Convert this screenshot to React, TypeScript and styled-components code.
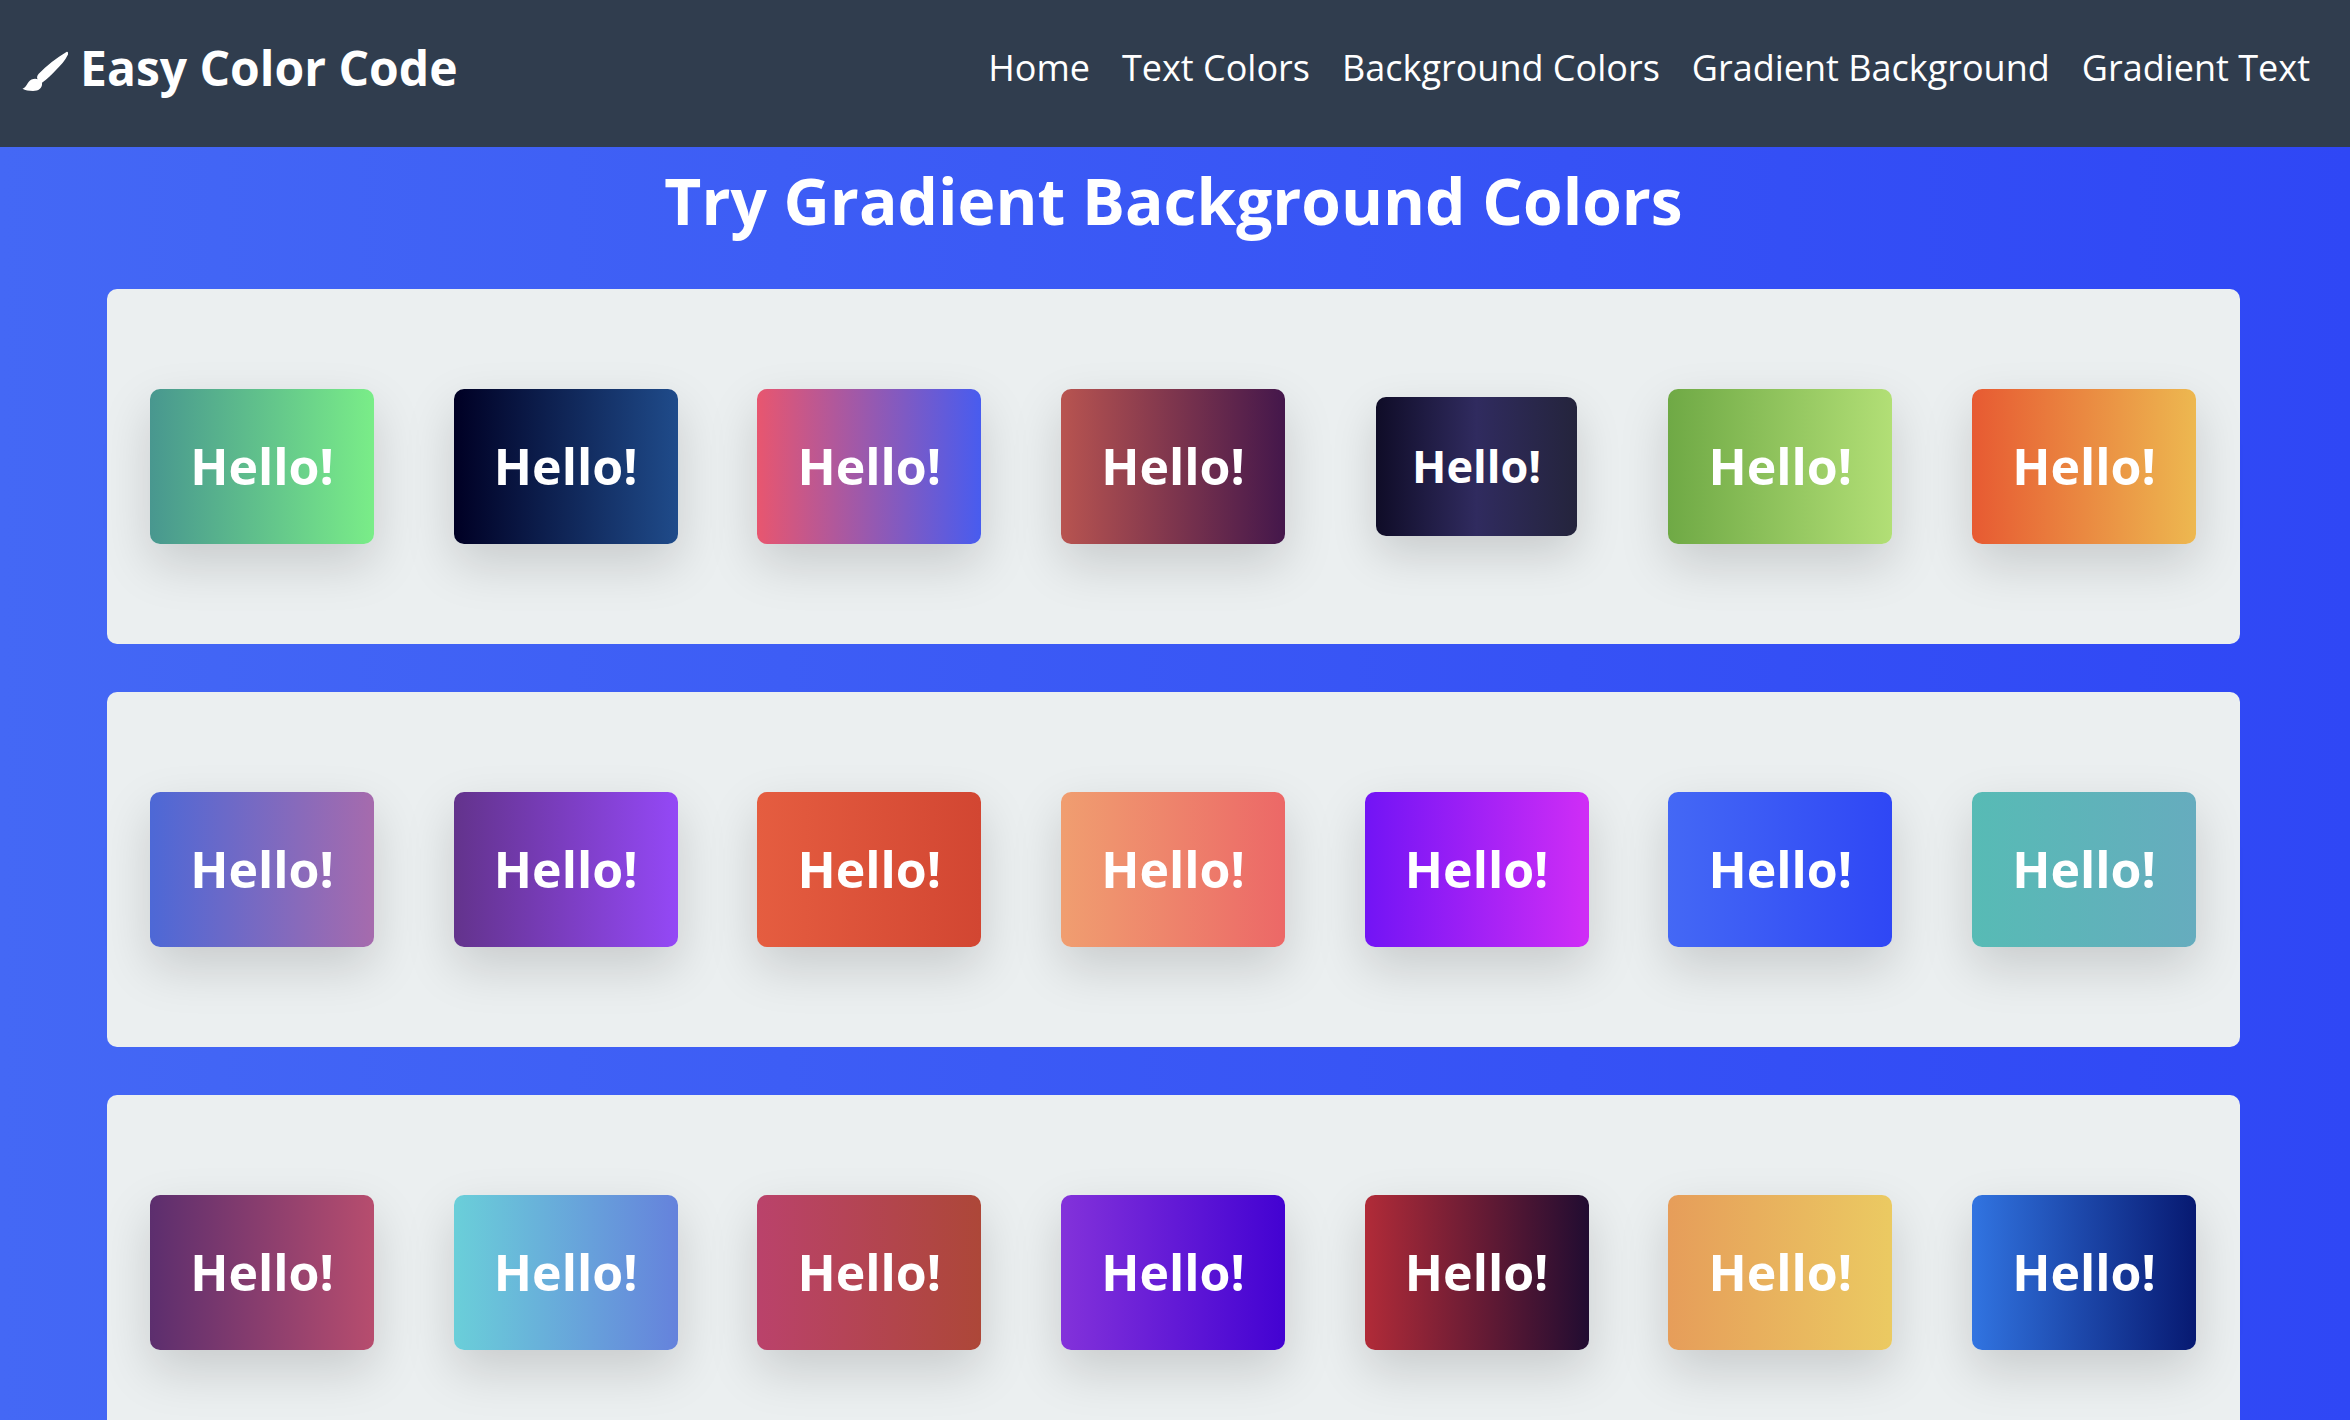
import React from "react";
import styled, { createGlobalStyle, css } from "styled-components";

const GlobalStyle = createGlobalStyle`
  * {
    box-sizing: border-box;
  }

  body {
    margin: 0;
    font-family: "Open Sans", "Noto Sans", sans-serif;
    color: #ffffff;
    background: #3f62f6;
  }
`;

const Page = styled.div`
  min-height: 100vh;
  background: linear-gradient(to right, #4468f5, #2f47f5);
`;

const Header = styled.header`
  display: flex;
  justify-content: space-between;
  align-items: flex-start;
  min-height: 147px;
  padding: 35px 40px 32px 22px;
  background: #303d4e;
`;

const Brand = styled.a`
  display: flex;
  align-items: center;
  gap: 12px;
  color: inherit;
  font-size: 48px;
  font-weight: 700;
  line-height: 65px;
  text-decoration: none;
`;

const BrushIcon = styled.svg`
  width: 46px;
  height: 40px;
  margin-top: 6px;
  fill: currentColor;
`;

const Nav = styled.nav`
  display: flex;
  flex-wrap: wrap;
  gap: 32px;
  padding-top: 8px;
`;

const NavLink = styled.a`
  color: inherit;
  font-size: 36px;
  line-height: 49px;
  text-decoration: none;
`;

const Main = styled.main`
  padding: 10px 110px 48px 107px;
`;

const Title = styled.h1`
  margin: 0 0 44px;
  font-size: 64px;
  font-weight: 700;
  line-height: 88px;
  text-align: center;
`;

const Panels = styled.div`
  display: flex;
  flex-direction: column;
  gap: 48px;
`;

const Panel = styled.section`
  display: flex;
  justify-content: space-between;
  padding: 100px 44px 100px 43px;
  border-radius: 10px;
  background: #ebeff0;
`;

const Slot = styled.div`
  display: flex;
  align-items: center;
  justify-content: center;
  width: 224px;
  height: 155px;
`;

const Swatch = styled.button<{ $colors: string; $shrunk: boolean }>`
  width: 100%;
  height: 100%;
  padding: 0 0 2px;
  border: 0;
  border-radius: 10px;
  color: inherit;
  font-family: inherit;
  font-size: 50px;
  font-weight: 700;
  line-height: 68px;
  cursor: pointer;
  background: linear-gradient(to right, ${(p) => p.$colors});
  box-shadow: 0 20px 50px rgba(0, 0, 0, 0.15);

  ${(p) =>
    p.$shrunk &&
    css`
      width: 90%;
      height: 90%;
      font-size: 45px;
      box-shadow: 0 18px 45px rgba(0, 0, 0, 0.15);
    `}
`;

const rows: string[][] = [
  [
    "#48978f, #7aed88",
    "#000024, #1f4b8a",
    "#e8566f, #485cef",
    "#b85450, #44174b",
    "#0f0c27, #302b5f, #24243c",
    "#6fa945, #b2df76",
    "#e75a32, #edb850",
  ],
  [
    "#4d68d6, #a66bad",
    "#63338c, #9448f6",
    "#e55d40, #d24632",
    "#f09e70, #ec6867",
    "#7214f5, #d02df6",
    "#4468f5, #2f47f5",
    "#57bbb5, #66acbe",
  ],
  [
    "#5c2e6e, #b74d6e",
    "#6acfd9, #6582dc",
    "#ba426b, #ad4738",
    "#8332da, #4302d2",
    "#b12b38, #210c31",
    "#e69d5a, #ebca62",
    "#3174e1, #071971",
  ],
];

const links = [
  "Home",
  "Text Colors",
  "Background Colors",
  "Gradient Background",
  "Gradient Text",
];

const active = rows[0][4];

export default function App() {
  return (
    <Page>
      <GlobalStyle />
      <Header>
        <Brand href="#">
          <BrushIcon viewBox="0 0 46 40" aria-hidden="true">
            <path d="M44.8 0.8C46 0.6 46.4 2 46 3.6C43 10 38.500 14.500 34 19C29 24 25 28.500 20 31.800C20.500 37 17 40 11 40C7 40 3 39.500 0.500 37.800C5 36.500 5 31 9.500 28.600C12 27.400 14.500 27.800 15.600 28.200C14.600 26.500 15 24.800 16.500 23C25 14.500 34 7 44.800 0.800Z" />
          </BrushIcon>
          Easy Color Code
        </Brand>
        <Nav>
          {links.map((label) => (
            <NavLink href="#" key={label}>
              {label}
            </NavLink>
          ))}
        </Nav>
      </Header>
      <Main>
        <Title>Try Gradient Background Colors</Title>
        <Panels>
          {rows.map((row) => (
            <Panel key={row[0]}>
              {row.map((colors) => (
                <Slot key={colors}>
                  <Swatch type="button" $colors={colors} $shrunk={colors === active}>
                    Hello!
                  </Swatch>
                </Slot>
              ))}
            </Panel>
          ))}
        </Panels>
      </Main>
    </Page>
  );
}
